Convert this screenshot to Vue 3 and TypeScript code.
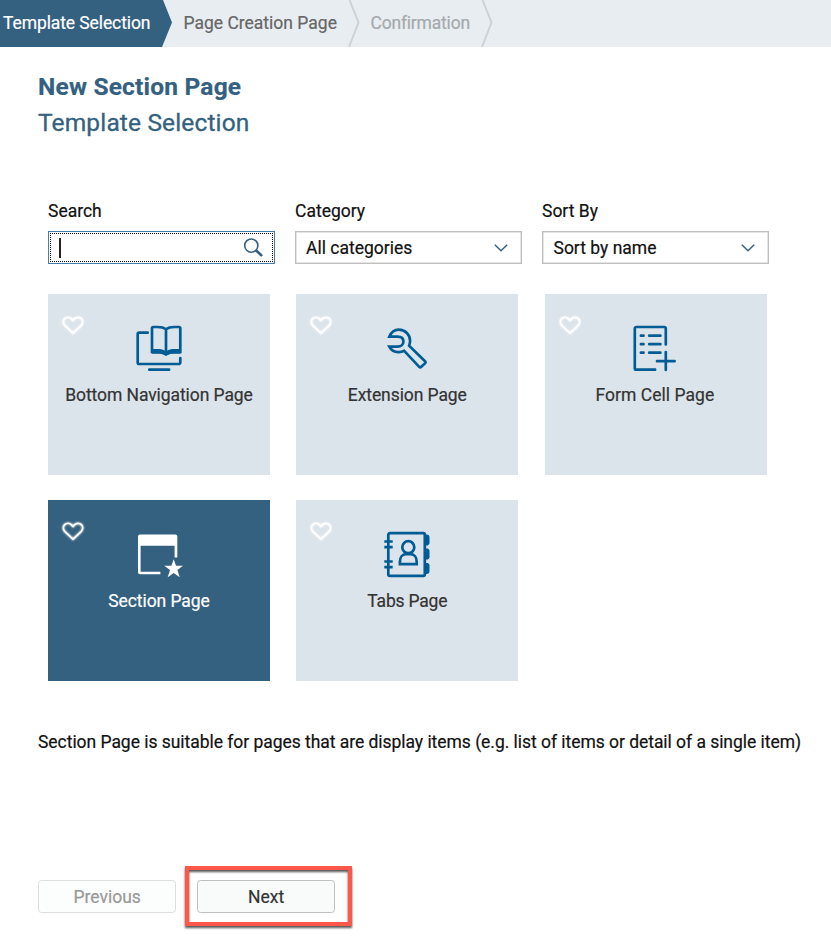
<script setup lang="ts">
import { ref } from 'vue'

type IconName = 'book' | 'wrench' | 'form' | 'section' | 'tabs'

interface Template {
  name: string
  icon: IconName
}

const templates: Template[] = [
  { name: 'Bottom Navigation Page', icon: 'book' },
  { name: 'Extension Page', icon: 'wrench' },
  { name: 'Form Cell Page', icon: 'form' },
  { name: 'Section Page', icon: 'section' },
  { name: 'Tabs Page', icon: 'tabs' },
]

const selected = ref('Section Page')
</script>

<template>
  <div class="wizard">
    <nav class="steps">
      <div class="step current"><span>Template Selection</span></div>
      <div class="step next-step">
        <span>Page Creation Page</span>
        <svg class="sep" viewBox="0 0 12 47"><path d="M1.5 0 10.5 22.5 1 47" /></svg>
      </div>
      <div class="step disabled">
        <span>Confirmation</span>
        <svg class="sep" viewBox="0 0 12 47"><path d="M1.5 0 10.5 22.5 1 47" /></svg>
      </div>
    </nav>

    <header class="heading">
      <h1>New Section Page</h1>
      <h2>Template Selection</h2>
    </header>

    <section class="filters">
      <div class="field">
        <label>Search</label>
        <div class="control focused">
          <div class="focus-ring">
            <i class="caret"></i>
            <svg class="lens" viewBox="0 0 20 20">
              <circle cx="8.3" cy="7.6" r="6.6" />
              <path class="handle" d="m13.400 12.700 4.900 4.500" />
            </svg>
          </div>
        </div>
      </div>
      <div class="field">
        <label>Category</label>
        <div class="control">
          <span>All categories</span>
          <svg class="chevron" viewBox="0 0 14 8"><path d="m.8.8 6.2 6 6.2-6" /></svg>
        </div>
      </div>
      <div class="field">
        <label>Sort By</label>
        <div class="control sort">
          <span>Sort by name</span>
          <svg class="chevron" viewBox="0 0 14 8"><path d="m.8.8 6.2 6 6.2-6" /></svg>
        </div>
      </div>
    </section>

    <section class="tiles">
      <article
        v-for="t in templates"
        :key="t.name"
        class="tile"
        :class="[t.icon, { selected: t.name === selected }]"
        @click="selected = t.name"
      >
        <svg class="heart" viewBox="0 0 22 19">
          <path d="M11 17.200 2.900 9.600C.9 7.500.9 4.500 2.700 2.700 4.500 .9 7.500 .9 9.300 2.700L11 4.400l1.700-1.700c1.800-1.800 4.800-1.800 6.600 0 1.800 1.800 1.800 4.800-.2 6.900Z" />
        </svg>
        <svg class="icon" viewBox="0 0 48 48">
          <g v-if="t.icon === 'book'">
            <path d="M12.700 8.700H4.200a1.500 1.500 0 0 0-1.500 1.500v28.300a1.500 1.500 0 0 0 1.500 1.500h39.600a1.500 1.500 0 0 0 1.500-1.500V34M14.300 45.700h19.800" stroke-linecap="round" />
            <path d="M31 5.200C28.500 3.300 26 3 22.500 3H18.300a1.300 1.300 0 0 0-1.300 1.300V28h5.500c3.500 0 6 .3 8.500 2 2.500-1.700 5-2 8.500-2h5.800V4.300A1.300 1.300 0 0 0 44 3h-4.500C36 3 33.500 3.300 31 5.200ZM31 5v24" />
            <path class="solid" d="M16.500 25H22c4 0 6.500.6 9 2.600 2.500-2 5-2.600 9-2.600h5.500v4.800h-6c-4 0-6 .4-8.500 2.300-2.500-1.900-4.500-2.300-8.500-2.300h-5a1 1 0 0 1-1-1Z" />
          </g>
          <path v-else-if="t.icon === 'wrench'" d="M6.300 12.700C8.200 8.500 11.500 5.700 15.600 5.700c6.800 0 11.500 4.900 11.500 11.100 0 1.700-.4 3.300-1 4.900L42 37.300a1.500 1.500 0 0 1 0 2.100l-3.700 3.400a1.500 1.500 0 0 1-2.100 0L21.200 26.800a11.500 11.500 0 0 1-6 1.300c-4 0-7.100-2.100-8.900-5.500h8.200c3.800 0 5.900-2.300 5.900-5.200s-2.100-4.700-5.900-4.700Z" stroke-linejoin="miter" />
          <g v-else-if="t.icon === 'form'" stroke-linecap="round">
            <path d="M34.800 20.400V4.500A1.500 1.500 0 0 0 33.300 3H5.300a1.500 1.500 0 0 0-1.500 1.500v39.700a1.500 1.500 0 0 0 1.500 1.500h18.800" />
            <path d="M9.900 11.700h2.600M18.200 11.700h11.200M9.900 20.200h2.600M18.200 20.200h11.200M9.900 28.700h2.600M18.200 28.700h11.200" />
            <path d="M26 37.200h17.600M34.800 28v18" />
          </g>
          <g v-else-if="t.icon === 'section'" class="solid">
            <path d="M3 6.500a2 2 0 0 1 2-2h35.300a2 2 0 0 1 2 2v20.900h-2.700V15.800H5.600v25.900h19.800v2.500H5a2 2 0 0 1-2-2Z" />
            <path d="m38.700 29.200 2.300 6.600h7l-5.600 4.300 2.300 7.100-6-4.300-6 4.300 2.300-7.100-5.700-4.300h7Z" />
          </g>
          <g v-else>
            <rect x="5.300" y="3.200" width="36.500" height="42.600" rx="1.500" />
            <path d="M1.300 11.500h8.400M1.300 17.200h8.400M1.300 31.500h8.400M1.300 37.200h8.400" />
            <circle cx="25.300" cy="17.200" r="6" />
            <path d="M16.900 34.200v-2.400c0-4.500 2.500-7.600 6-7.600h4.800c3.500 0 6 3.100 6 7.600v2.400Z" />
            <path class="solid" d="M41 4.500h2.500a3 3 0 0 1 3 3V13.500l-1.500 2h-4ZM41 18.500h4l1.500 1.700v7.600l-1.500 1.700h-4ZM41 33h4l1.500 1.700v6.300a3 3 0 0 1-3 3h-2.500Z" />
          </g>
        </svg>
        <span class="name">{{ t.name }}</span>
      </article>
    </section>

    <p class="description">
      Section Page is suitable for pages that are display items (e.g. list of items or detail of a single item)
    </p>

    <footer class="actions">
      <button class="btn prev" disabled><span>Previous</span></button>
      <div class="callout">
        <button class="btn next"><span>Next</span></button>
        <i class="frame"></i>
      </div>
    </footer>
  </div>
</template>

<style>
body {
  margin: 0;
  background: #fff;
}
</style>

<style scoped>
.wizard {
  box-sizing: border-box;
  width: 831px;
  height: 937px;
  overflow: hidden;
  font-family: Roboto, 'Liberation Sans', sans-serif;
  font-size: 17.500px;
  line-height: 24px;
  color: #111;
  white-space: nowrap;
  -webkit-text-stroke: 0.200px currentColor;
}
svg {
  display: block;
  overflow: visible;
  fill: none;
}
.steps {
  display: flex;
  height: 47px;
  background: #e8edf1;
}
.step {
  display: flex;
  box-sizing: border-box;
  align-items: center;
  justify-content: space-between;
  height: 47px;
}
.step span {
  padding-bottom: 1px;
}
.current {
  width: 172px;
  padding-left: 3px;
  color: #fff;
  letter-spacing: -0.100px;
  background: #346180;
  clip-path: polygon(0 0, 163px 0, 172px 22.500px, 162px 47px, 0 47px);
}
.next-step {
  width: 188px;
  padding-left: 11.500px;
  color: #666;
}
.disabled {
  width: 133px;
  padding-left: 10.500px;
  color: #a5a9ac;
  letter-spacing: -0.200px;
}
.sep {
  width: 12px;
  height: 47px;
  stroke: #cdd2d7;
  stroke-width: 2;
}
.heading {
  padding: 21.500px 0 0 38px;
  color: #346180;
}
h1,
h2 {
  margin: 0;
  font-size: 24.500px;
  line-height: 36px;
}
h1 {
  letter-spacing: 0.200px;
}
h2 {
  font-weight: 400;
  letter-spacing: 0.150px;
  -webkit-text-stroke-width: 0.300px;
}
.filters {
  display: flex;
  gap: 20px;
  padding: 58.500px 0 0 48px;
}
.field {
  width: 227px;
}
label {
  display: block;
  height: 32px;
}
.control {
  display: flex;
  box-sizing: border-box;
  align-items: center;
  justify-content: space-between;
  height: 33px;
  padding: 0 13px 0 10px;
  border: 1px solid #bfbfbf;
  box-shadow: inset 0 0 0 0.500px #ccc;
}
.control.sort {
  padding-left: 10.500px;
}
.control.focused {
  padding: 1px;
  border-color: #427cac;
  box-shadow: none;
}
.focus-ring {
  display: flex;
  box-sizing: border-box;
  flex: 1;
  align-items: center;
  justify-content: space-between;
  height: 29px;
  padding: 0 9px 0 8px;
  border: 1px dotted #000;
}
.caret {
  width: 1.500px;
  height: 20px;
  background: #222;
}
.lens {
  width: 20px;
  height: 20px;
  stroke: #346180;
  stroke-width: 1.600;
}
.handle {
  stroke-width: 2.600;
  stroke-linecap: round;
}
.chevron {
  width: 14px;
  height: 8px;
  stroke: #346180;
  stroke-width: 1.500;
}
.tiles {
  display: grid;
  grid-template-columns: repeat(3, 222px);
  grid-auto-rows: 181px;
  gap: 25px 26.300px;
  padding: 30px 0 0 48px;
}
.tile {
  position: relative;
  display: flex;
  flex-direction: column;
  align-items: center;
  padding-top: 30px;
  color: #333;
  background: #dce4eb;
}
.tile.selected {
  color: #fff;
  background: #346180;
}
.heart {
  position: absolute;
  top: 22px;
  left: 14px;
  width: 22px;
  height: 19px;
  stroke: #fff;
  stroke-width: 1.800;
  filter: drop-shadow(0 0 1px #fff);
}
.section .heart,
.tabs .heart {
  top: 21.500px;
}
.icon {
  width: 48px;
  height: 48px;
  stroke: #005c94;
  stroke-width: 2.700;
}
.form .icon {
  margin-left: -1.500px;
}
.section .icon,
.tabs .icon {
  margin-top: -0.500px;
}
.solid {
  fill: #005c94;
  stroke: none;
}
.selected .solid {
  fill: #fff;
}
.name {
  margin-top: 11px;
  letter-spacing: -0.080px;
}
.form .name {
  margin-left: -1.500px;
  letter-spacing: 0.040px;
}
.section .name,
.tabs .name {
  margin-top: 11.500px;
}
.tabs .name {
  letter-spacing: -0.200px;
}
.description {
  margin: 49px 0 0 38px;
  letter-spacing: -0.040px;
}
.actions {
  display: flex;
  gap: 20.500px;
  padding: 126px 0 0 38px;
}
.callout {
  position: relative;
}
.btn {
  display: block;
  box-sizing: border-box;
  width: 138.400px;
  height: 33px;
  padding: 1px 0 0;
  font: inherit;
  color: #333;
  background: #f9fafa;
  border: 1px solid #bfbfbf;
  border-radius: 3.500px;
}
.btn.prev {
  color: #999;
  background: #fcfdfd;
  border-color: #dedede;
}
.frame {
  position: absolute;
  top: -14px;
  left: -12px;
  box-sizing: border-box;
  width: 167px;
  height: 60px;
  border: 4px solid #ff584a;
  filter: drop-shadow(0 2.500px 1px #555);
}
</style>
